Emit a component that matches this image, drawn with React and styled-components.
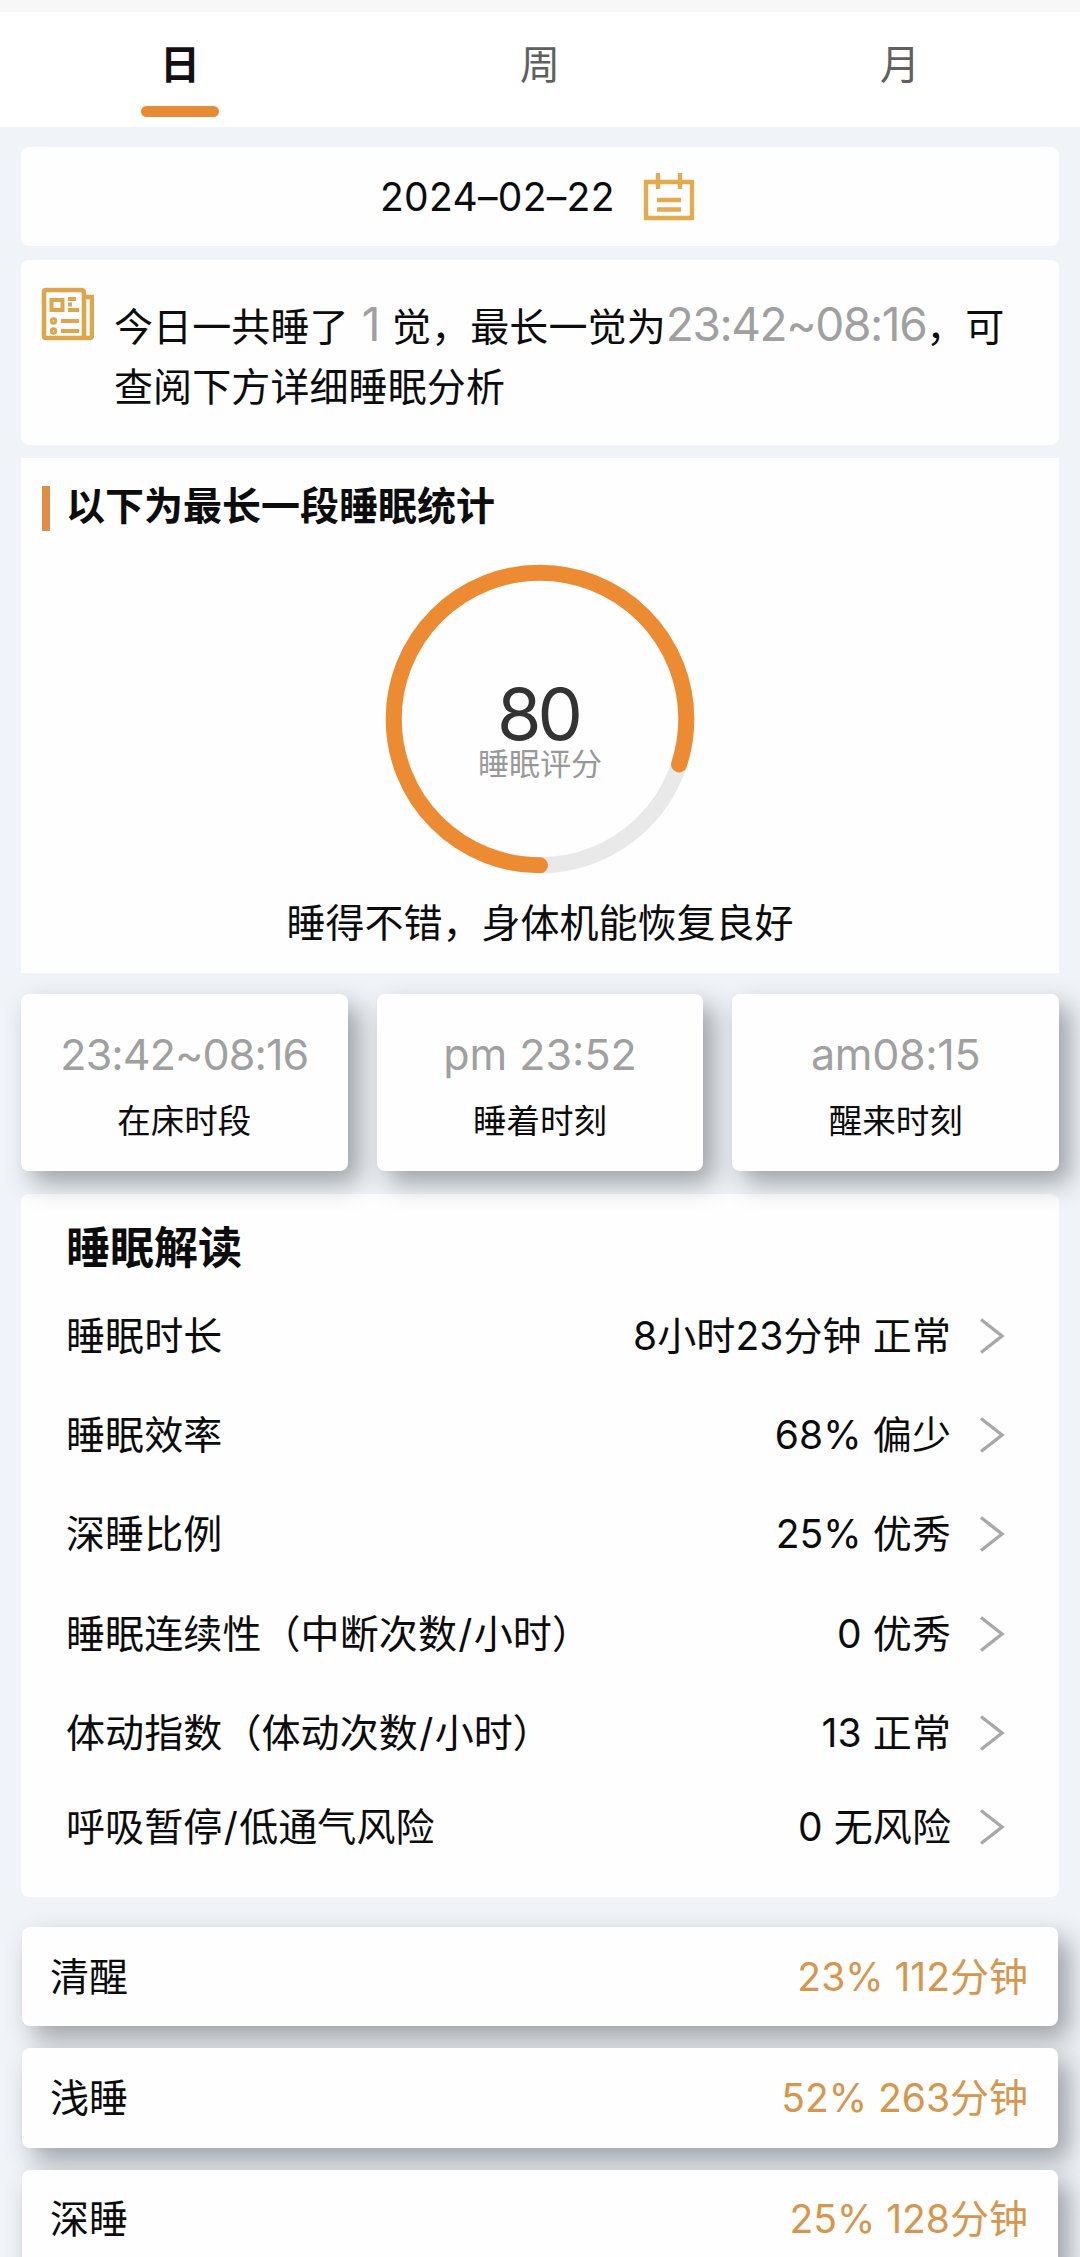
import React from "react";
import styled, { createGlobalStyle } from "styled-components";

const GlobalStyle = createGlobalStyle`
  * { box-sizing: border-box; }
  body {
    margin: 0;
    background: #f0f4f8;
    font-family: Inter, "Noto Sans CJK SC", sans-serif;
    font-size: 39px;
    color: #0c0c0c;
  }
`;

const Page = styled.div`
  width: 1080px;
  height: 2257px;
  overflow: hidden;
  background: #f0f4f8;
`;

const Tabs = styled.nav`
  display: flex;
  height: 127px;
  border-top: 12px solid #f7f7f7;
  background: #fff;
`;

const Tab = styled.div`
  flex: 1;
  display: flex;
  flex-direction: column;
  align-items: center;
  padding-top: 24px;
  font-size: 40px;
  line-height: 58px;
  color: ${(p) => (p.$active ? "#111" : "#606060")};
  font-weight: ${(p) => (p.$active ? 700 : 400)};

  &::after {
    content: "";
    width: 78px;
    height: 11px;
    margin-top: 12px;
    border-radius: 6px;
    background: ${(p) => (p.$active ? "#e98b35" : "transparent")};
  }
`;

const Content = styled.main`
  display: flex;
  flex-direction: column;
  padding: 20px 21px 0;
`;

const Card = styled.section`
  background: #fefefe;
  border-radius: ${(p) => p.$radius ?? 8}px;
`;

const DateCard = styled(Card)`
  display: flex;
  align-items: center;
  height: 99px;
  padding-left: 359px;
`;

const DateText = styled.span`
  width: 263px;
  letter-spacing: 0.3px;
  white-space: nowrap;
`;

const SummaryCard = styled(Card)`
  display: flex;
  height: 185px;
  margin-top: 14px;
  padding: 27px 0 0 20px;
`;

const Summary = styled.p`
  margin: 10px 0 0 20px;
  line-height: 60px;
  white-space: nowrap;
  letter-spacing: 0.1px;
  word-spacing: 2px;
`;

const Muted = styled.span`
  font-size: 46px;
  font-weight: 400;
  line-height: 40px;
  letter-spacing: -1.4px;
  color: #a0a0a0;
`;

const ScoreCard = styled(Card)`
  display: flex;
  flex-direction: column;
  height: 515px;
  margin-top: 13px;
  padding-top: 28px;
`;

const ScoreTitle = styled.h2`
  display: flex;
  gap: 16px;
  height: 45px;
  margin: 0 0 0 21px;
  font-size: 39px;
  font-weight: 700;
  line-height: 40px;

  &::before {
    content: "";
    width: 8px;
    height: 45px;
    background: #e08d46;
  }
`;

const Gauge = styled.div`
  display: grid;
  place-items: center;
  width: 310px;
  height: 310px;
  margin: 33px auto 0;

  > * { grid-area: 1 / 1; }
`;

const GaugeText = styled.div`
  display: flex;
  flex-direction: column;
  align-items: center;
  padding-top: 25px;
`;

const Score = styled.span`
  font-size: 72px;
  line-height: 64px;
  letter-spacing: -4px;
  margin-right: 4px;
  color: #333;
`;

const ScoreLabel = styled.span`
  font-size: 31px;
  line-height: 36px;
  color: #999;
`;

const Verdict = styled.p`
  margin: 20px 0 0;
  line-height: 58px;
  text-align: center;
`;

const Stats = styled.div`
  position: relative;
  z-index: 1;
  display: grid;
  grid-template-columns: repeat(3, 1fr);
  gap: 29px;
  margin-top: 21px;
`;

const StatCard = styled(Card)`
  display: flex;
  flex-direction: column;
  align-items: center;
  height: 177px;
  padding-top: 33px;
  box-shadow: 11px 12px 26px rgba(40, 45, 50, 0.42);
`;

const StatValue = styled.span`
  font-size: 43px;
  font-weight: 400;
  line-height: 54px;
  letter-spacing: ${(p) => p.$track}px;
  color: #a0a0a0;
  white-space: pre;
`;

const StatLabel = styled.span`
  font-size: 33.5px;
  line-height: 50px;
  margin-top: 15px;
`;

const Analysis = styled(Card)`
  height: 703px;
  margin-top: 23px;
  padding: 26px 54px 0 45px;
`;

const AnalysisTitle = styled.h2`
  margin: 0 0 10px;
  font-size: 44px;
  font-weight: 700;
  line-height: 56px;
`;

const Row = styled.div`
  display: flex;
  align-items: center;
  height: ${(p) => (p.$short ? 89 : 99.3)}px;
  letter-spacing: 0.1px;
`;

const Label = styled.span`
  padding-bottom: 6px;
  white-space: nowrap;
`;

const Slash = styled.span`
  padding: 0 1.3px;
`;

const RowValue = styled(Label)`
  margin-left: auto;
  margin-right: 28px;
`;

const Stages = styled.div`
  display: flex;
  flex-direction: column;
  gap: 22px;
  margin-top: 30px;
`;

const StageCard = styled(Card)`
  position: relative;
  display: flex;
  align-items: center;
  justify-content: space-between;
  height: 99.3px;
  margin: 0 1px;
  padding: 0 30px 0 28px;
  box-shadow: 11px 12px 26px rgba(40, 45, 50, 0.42);
`;

const StageValue = styled(Label)`
  color: #d6964c;
`;

const CalendarIcon = () => (
  <svg width="52" height="50" viewBox="0 0 52 50" fill="none" stroke="#e3ab4d" strokeWidth="4.4">
    <path d="M3 10H49V46H3Z M15 1V17 M37 1V17 M14 28H38 M14 37.500H38" />
  </svg>
);

const NewsIcon = () => (
  <svg width="53" height="54" viewBox="0 0 53 54" fill="none" stroke="#dda64e" strokeWidth="4.6">
    <path d="M43 51V6Q43 3 40 3H5Q3 3 3 5V49Q3 51 5 51H48Q51 51 51 48V10H43" />
    <path strokeWidth="4" d="M10.500 13H21.500V23H10.500Z M27 12H35 M27 17.500H31 M27 23H38 M20 34H38 M20 44H38" />
    <circle cx="12.500" cy="34" r="2.200" strokeWidth="3" />
    <circle cx="12.500" cy="44" r="2.200" strokeWidth="3" />
  </svg>
);

const Chevron = () => (
  <svg width="26" height="38" viewBox="0 0 26 38" fill="none" stroke="#a8a8a8" strokeWidth="3.4">
    <path d="M2 2.500L23 19L2 35.500" />
  </svg>
);

const RADIUS = 146.3;
const LENGTH = 2 * Math.PI * RADIUS;

const Ring = ({ percent }) => (
  <svg width="310" height="310" viewBox="0 0 310 310" fill="none" strokeWidth="16">
    <circle cx="155" cy="155" r={RADIUS} stroke="#e9e9e9" />
    <circle
      cx="155"
      cy="155"
      r={RADIUS}
      stroke="#ed8b32"
      strokeLinecap="round"
      strokeDasharray={`${(LENGTH * percent) / 100} ${LENGTH}`}
      transform="rotate(90 155 155)"
    />
  </svg>
);

const stats = [
  { value: "23:42~08:16", label: "在床时段", track: -0.9 },
  { value: "pm 23:52", label: "睡着时刻", track: 0 },
  { value: "am08:15", label: "醒来时刻", track: -0.3 },
];

const rows = [
  ["睡眠时长", "8小时23分钟 正常"],
  ["睡眠效率", "68% 偏少"],
  ["深睡比例", "25% 优秀"],
  ["睡眠连续性（中断次数/小时）", "0 优秀"],
  ["体动指数（体动次数/小时）", "13 正常"],
  ["呼吸暂停/低通气风险", "0 无风险"],
];

const stages = [
  ["清醒", "23% 112分钟"],
  ["浅睡", "52% 263分钟"],
  ["深睡", "25% 128分钟"],
];

const RowLabel = ({ text }) => {
  const [head, tail] = text.split("/");
  return (
    <Label>
      {head}
      {tail && <Slash>/</Slash>}
      {tail}
    </Label>
  );
};

export default function App() {
  return (
    <Page lang="zh-CN">
      <GlobalStyle />
      <Tabs>
        <Tab $active>日</Tab>
        <Tab>周</Tab>
        <Tab>月</Tab>
      </Tabs>
      <Content>
        <DateCard>
          <DateText>2024–02–22</DateText>
          <CalendarIcon />
        </DateCard>
        <SummaryCard>
          <NewsIcon />
          <Summary>
            今日一共睡了 <Muted>1</Muted> 觉，最长一觉为<Muted>23:42~08:16</Muted>，可
            <br />
            查阅下方详细睡眠分析
          </Summary>
        </SummaryCard>
        <ScoreCard $radius={0}>
          <ScoreTitle>以下为最长一段睡眠统计</ScoreTitle>
          <Gauge>
            <Ring percent={80} />
            <GaugeText>
              <Score>80</Score>
              <ScoreLabel>睡眠评分</ScoreLabel>
            </GaugeText>
          </Gauge>
          <Verdict>睡得不错，身体机能恢复良好</Verdict>
        </ScoreCard>
        <Stats>
          {stats.map((s) => (
            <StatCard key={s.label}>
              <StatValue $track={s.track}>{s.value}</StatValue>
              <StatLabel>{s.label}</StatLabel>
            </StatCard>
          ))}
        </Stats>
        <Analysis>
          <AnalysisTitle>睡眠解读</AnalysisTitle>
          {rows.map(([label, value], i) => (
            <Row key={label} $short={i === rows.length - 1}>
              <RowLabel text={label} />
              <RowValue>{value}</RowValue>
              <Chevron />
            </Row>
          ))}
        </Analysis>
        <Stages>
          {stages.map(([label, value]) => (
            <StageCard key={label}>
              <Label>{label}</Label>
              <StageValue>{value}</StageValue>
            </StageCard>
          ))}
        </Stages>
      </Content>
    </Page>
  );
}
